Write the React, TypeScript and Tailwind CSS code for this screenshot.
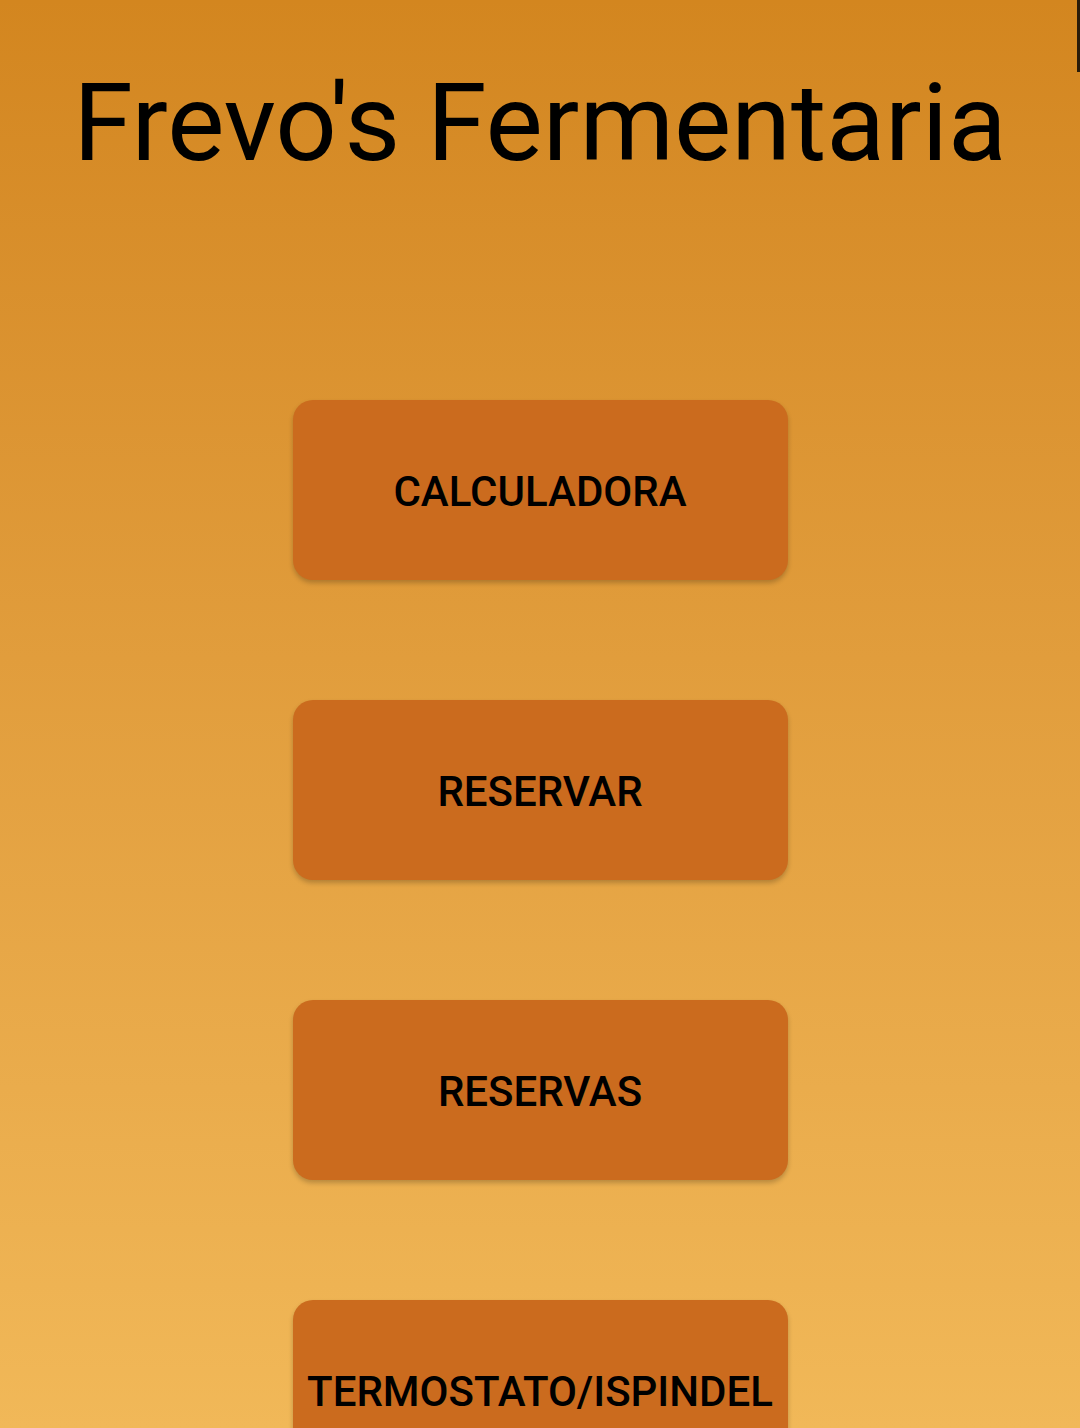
import React from "react";

const items = ["CALCULADORA", "RESERVAR", "RESERVAS", "TERMOSTATO/ISPINDEL"];

export default function App() {
  return (
    <div className="relative h-[1428px] w-full overflow-hidden bg-gradient-to-b from-[#d3861f] to-[#f1b858] font-['Roboto',sans-serif]">
      {/* scroll indicator */}
      <div className="absolute right-0 top-0 h-[72px] w-[3px] bg-[#2a1c0a]" />

      {/* Title */}
      <h1 className="pt-[58px] text-center text-[108px] leading-[130px] font-normal text-black">
        Frevo's Fermentaria
      </h1>

      {/* Menu */}
      <div className="mt-[212px] flex flex-col items-center gap-[120px]">
        {items.map((label) => (
          <button
            key={label}
            className="flex h-[180px] w-[495px] shrink-0 items-center justify-center rounded-[20px] bg-[#cb6b1e] pt-[2px] text-[42px] font-medium text-black shadow-[0_3px_5px_rgba(0,0,0,0.22)]"
          >
            {label}
          </button>
        ))}
      </div>
    </div>
  );
}
